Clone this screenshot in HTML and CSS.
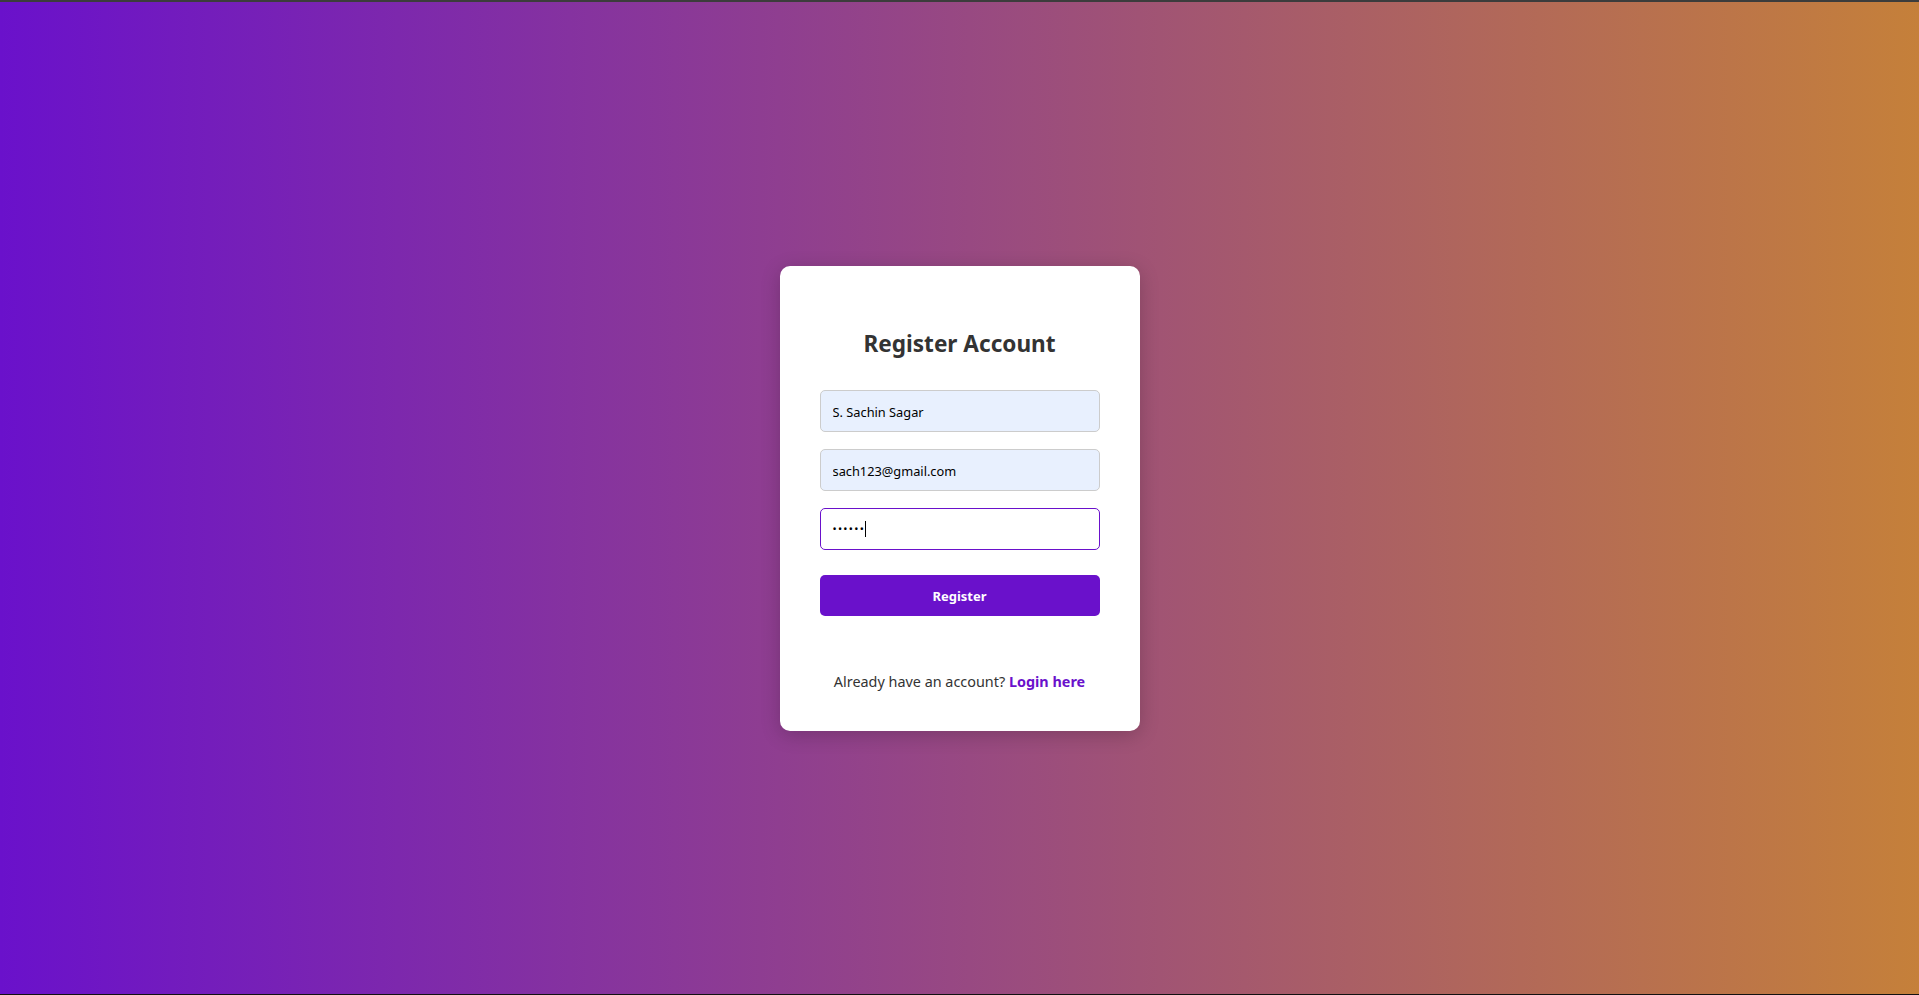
FILE: index.html
```html
<!DOCTYPE html>
<html lang="en">
<head>
<meta charset="utf-8">
<title>Register</title>
<link rel="stylesheet" href="styles.css">
</head>
<body>
<div class="topbar"></div>
<main class="page">
  <div class="card">
    <h2 class="title">Register Account</h2>
    <form class="form">
      <input class="field filled" type="text" value="S. Sachin Sagar">
      <input class="field filled" type="email" value="sach123@gmail.com">
      <div class="field active"><span class="dots">••••••</span><span class="caret"></span></div>
      <button class="btn" type="button">Register</button>
    </form>
    <p class="footer">Already have an account? <a class="link" href="#">Login here</a></p>
  </div>
</main>
</body>
</html>
```

FILE: styles.css
```css
* { box-sizing: border-box; }
html, body { margin: 0; padding: 0; }
body {
  height: 995px;
  display: flex;
  flex-direction: column;
  font-family: "Noto Sans", "Open Sans", sans-serif;
  background: linear-gradient(to right, #6a11cb 0%, #c5803a 100%);
  overflow: hidden;
}
.topbar {
  height: 2px;
  background: #3c3c3c;
  flex: none;
}
.page {
  flex: 1;
  display: flex;
  align-items: center;
  justify-content: center;
  border-bottom: 1px solid #111;
}
.card {
  width: 360px;
  height: 465px;
  background: #fff;
  border-radius: 10px;
  box-shadow: 0 4px 20px rgba(0, 0, 0, 0.2);
  padding: 62px 40px 0;
  display: flex;
  flex-direction: column;
}
.title {
  margin: 0 0 30px;
  height: 32px;
  line-height: 32px;
  font-size: 22.6px;
  font-weight: 700;
  color: #333;
  text-align: center;
}
.form {
  display: flex;
  flex-direction: column;
  margin: 0;
}
.field {
  width: 280px;
  height: 42px;
  padding: 2px 12px 0;
  border: 1px solid #ccc;
  border-radius: 5px;
  font-family: "Noto Sans", sans-serif;
  font-size: 12.8px;
  color: #000;
  margin: 0 0 17px;
  outline: none;
}
.filled { background: #e8f0fe; }
.active {
  border-color: #6a11cb;
  background: #fff;
  display: flex;
  align-items: center;
  padding-top: 0;
  margin-bottom: 25px;
}
.dots {
  font-size: 11px;
  letter-spacing: 1.3px;
  color: #000;
}
.caret {
  width: 1px;
  height: 16px;
  background: #000;
}
.btn {
  width: 280px;
  height: 41px;
  border: none;
  border-radius: 5px;
  background: #6a11cb;
  color: #fff;
  font-family: "Noto Sans", sans-serif;
  font-size: 13px;
  font-weight: 700;
  cursor: pointer;
  padding-top: 2px;
}
.footer {
  margin: 56px 0 0;
  line-height: 20px;
  font-size: 14.4px;
  color: #333;
  text-align: center;
}
.link {
  color: #6a11cb;
  font-weight: 700;
  text-decoration: none;
}
```
